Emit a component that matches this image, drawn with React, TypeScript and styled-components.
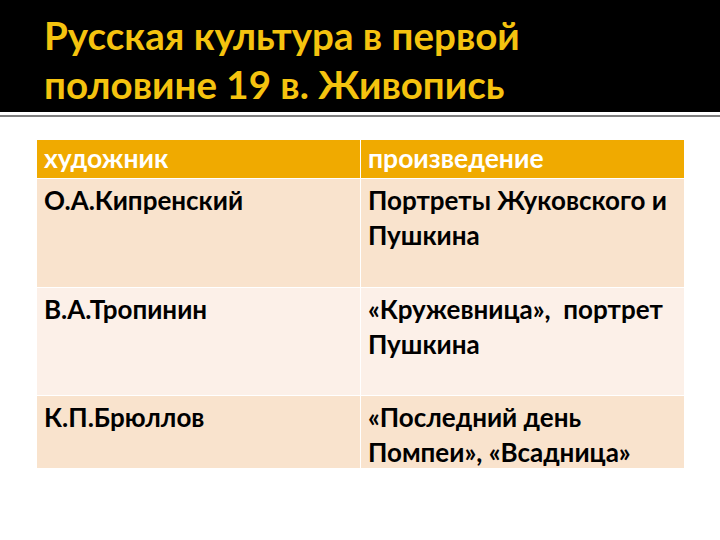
import * as React from 'react';
import styled, { createGlobalStyle } from 'styled-components';

const GlobalStyle = createGlobalStyle`
    html, body {
        margin: 0;
        padding: 0;
        background: #ffffff;
    }
    body {
        width: 720px;
        height: 540px;
        overflow: hidden;
        font-family: Lato, "Open Sans", sans-serif;
    }
`;

interface IRow {
    artist: string;
    works: string;
    height: number;
    shade: 'dark' | 'light';
}

const rows: IRow[] = [
    { artist: 'О.А.Кипренский', works: 'Портреты Жуковского и Пушкина', height: 108, shade: 'dark' },
    { artist: 'В.А.Тропинин', works: '«Кружевница»,  портрет Пушкина', height: 107, shade: 'light' },
    { artist: 'К.П.Брюллов', works: '«Последний день Помпеи», «Всадница»', height: 72, shade: 'dark' }
];

const Slide = styled.div`
    width: 720px;
    height: 540px;
    display: flex;
    flex-direction: column;
`;

const TitleBar = styled.header`
    background: #000000;
    height: 112px;
    box-sizing: border-box;
    padding: 11px 0 0 44px;
`;

const Title = styled.h1`
    margin: 0;
    font-family: Lato, sans-serif;
    font-weight: 700;
    font-size: 38.5px;
    line-height: 49px;
    color: #f5c30f;
    width: 580px;
`;

const Rule = styled.div`
    margin-top: 3px;
    height: 2px;
    background: #7f7f7f;
`;

const Grid = styled.div`
    margin: 23px 0 0 37px;
    width: 647px;
    display: grid;
    grid-template-columns: 323px 323px;
    column-gap: 1px;
    row-gap: 1px;
`;

const HeadCell = styled.div`
    background: #f0aa00;
    height: 38px;
    box-sizing: border-box;
    padding: 3px 0 0 7px;
    color: #ffffff;
    font-size: 26.5px;
    font-weight: 700;
    line-height: 30px;
`;

const Cell = styled.div<{ $shade: 'dark' | 'light'; $height: number }>`
    background: ${ p => p.$shade === 'dark' ? '#f9e3cd' : '#fcf0e8' };
    height: ${ p => p.$height }px;
    box-sizing: border-box;
    padding: 4px 4px 0 7px;
    color: #000000;
    font-size: 26px;
    font-weight: 700;
    line-height: 35px;
    white-space: pre-wrap;
`;

const App = () => (
    <Slide>
        <GlobalStyle/>
        <TitleBar>
            <Title>Русская культура в первой половине 19 в. Живопись</Title>
        </TitleBar>
        <Rule/>
        <Grid>
            <HeadCell>художник</HeadCell>
            <HeadCell>произведение</HeadCell>
            { rows.map(row => (
                <React.Fragment key={ row.artist }>
                    <Cell $shade={ row.shade } $height={ row.height }>{ row.artist }</Cell>
                    <Cell $shade={ row.shade } $height={ row.height }>{ row.works }</Cell>
                </React.Fragment>
            )) }
        </Grid>
    </Slide>
);

export default App;
